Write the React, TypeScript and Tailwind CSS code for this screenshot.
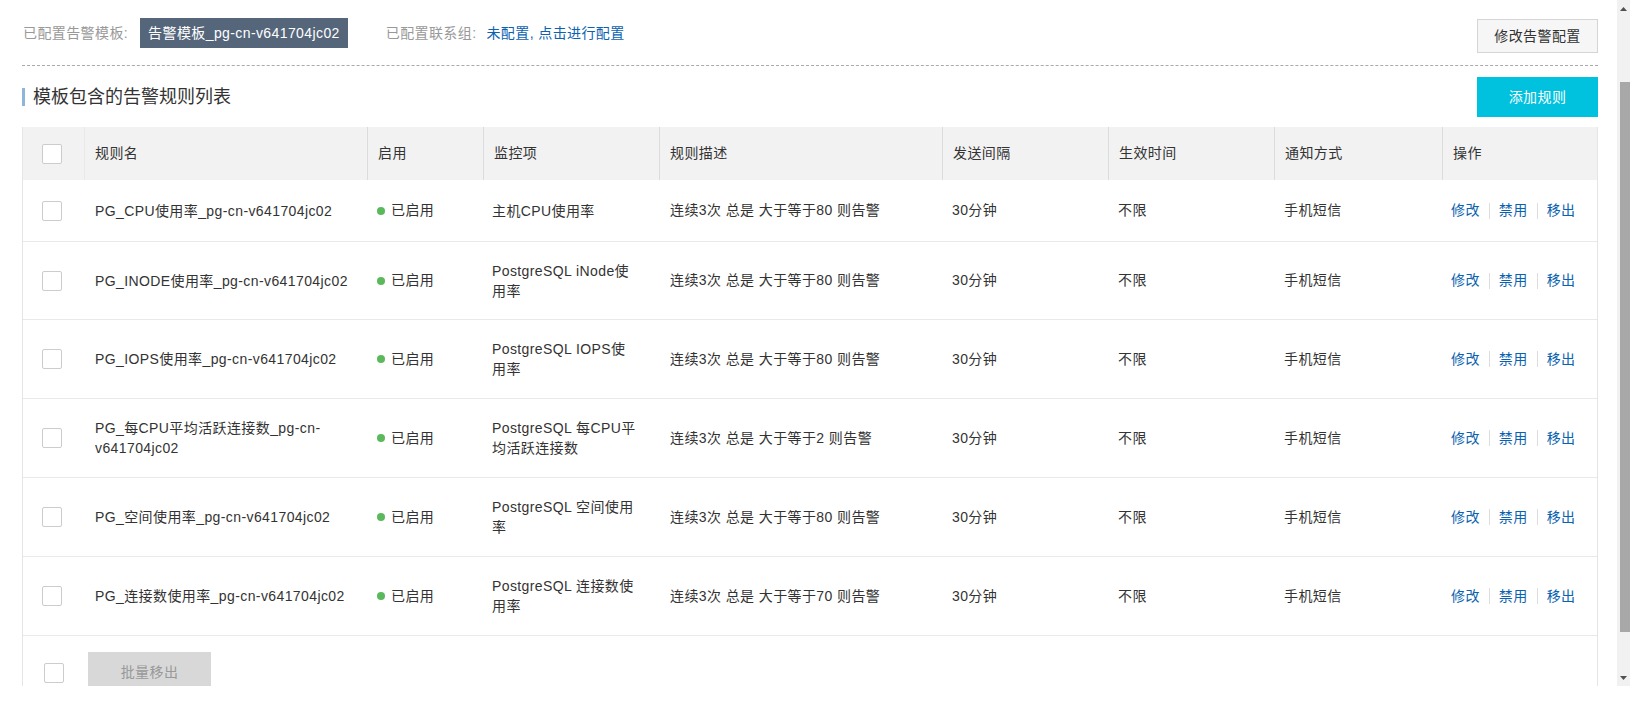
import React from 'react';

const font = { fontFamily: '"Liberation Sans", "Noto Sans CJK SC", sans-serif' };

const cols = 'grid grid-cols-[61px_283px_116px_176px_283px_166px_166px_168px_155px]';

const rows = [
  { name: ['PG_CPU使用率_pg-cn-v641704jc02'], monitor: ['主机CPU使用率'], desc: '连续3次 总是 大于等于80 则告警', h: 'h-[62px]' },
  { name: ['PG_INODE使用率_pg-cn-v641704jc02'], monitor: ['PostgreSQL iNode使', '用率'], desc: '连续3次 总是 大于等于80 则告警', h: 'h-[78px]' },
  { name: ['PG_IOPS使用率_pg-cn-v641704jc02'], monitor: ['PostgreSQL IOPS使', '用率'], desc: '连续3次 总是 大于等于80 则告警', h: 'h-[79px]' },
  { name: ['PG_每CPU平均活跃连接数_pg-cn-', 'v641704jc02'], monitor: ['PostgreSQL 每CPU平', '均活跃连接数'], desc: '连续3次 总是 大于等于2 则告警', h: 'h-[79px]' },
  { name: ['PG_空间使用率_pg-cn-v641704jc02'], monitor: ['PostgreSQL 空间使用', '率'], desc: '连续3次 总是 大于等于80 则告警', h: 'h-[79px]' },
  { name: ['PG_连接数使用率_pg-cn-v641704jc02'], monitor: ['PostgreSQL 连接数使', '用率'], desc: '连续3次 总是 大于等于70 则告警', h: 'h-[79px]' },
];

const Checkbox = () => (
  <span className="block w-[20px] h-[20px] bg-white border border-[#cccccc] rounded-[2px]" />
);

const Lines = ({ lines }: { lines: string[] }) => (
  <div className="leading-[20px] whitespace-nowrap">
    {lines.map((l, i) => (
      <div key={i}>{l}</div>
    ))}
  </div>
);

const headers = ['规则名', '启用', '监控项', '规则描述', '发送间隔', '生效时间', '通知方式', '操作'];

const Arrow = ({ down }: { down?: boolean }) => (
  <div className="h-[17px] flex items-center justify-center">
    <svg width="7" height="4" viewBox="0 0 7 4">
      <path d={down ? 'M0 0h7L3.5 4z' : 'M0 4h7L3.5 0z'} fill="#505050" />
    </svg>
  </div>
);

export default function App() {
  return (
    <div className="w-[1630px] h-[713px] bg-white text-[14px] tracking-[0.4px] text-[#333]" style={font}>
      <div className="flex h-[686px]">
        <div className="w-[1617px] h-[686px] overflow-hidden pl-[22px] pr-[19px] pt-[18px]">
          {/* configured template / contacts */}
          <div className="flex justify-between items-start">
            <div className="flex items-center h-[30px] pl-[1px]">
              <span className="text-[#999]">已配置告警模板:</span>
              <span className="ml-[12px] h-[30px] px-[8px] flex items-center bg-[#55667b] text-white">
                告警模板_pg-cn-v641704jc02
              </span>
              <span className="ml-[38px] text-[#999]">已配置联系组:</span>
              <a className="ml-[10px] text-[#0a62b0] cursor-pointer">未配置, 点击进行配置</a>
            </div>
            <button className="mt-[1px] w-[121px] h-[34px] border border-[#d5d5d5] bg-[#f6f6f6] text-[#333]">
              修改告警配置
            </button>
          </div>

          <div className="mt-[12px] border-t border-dashed border-[#aaaaaa]" />

          {/* title */}
          <div className="mt-[11px] flex justify-between items-center">
            <div className="flex items-center">
              <span className="w-[3px] h-[18px] bg-[#8db6da]" />
              <span className="ml-[8px] text-[18px] tracking-normal text-[#333]">模板包含的告警规则列表</span>
            </div>
            <button className="w-[121px] h-[40px] bg-[#00c1de] text-white">添加规则</button>
          </div>

          {/* table */}
          <div className="mt-[10px] border-x border-[#e5e5e5]">
            <div className={`${cols} h-[53px] bg-[#f2f2f2] items-stretch`}>
              <div className="flex items-center pl-[19px]">
                <Checkbox />
              </div>
              {headers.map((h, i) => (
                <div
                  key={h}
                  className={`flex items-center pl-[10px] border-l ${i === 0 ? 'border-[#e9e9e9]' : 'border-[#dcdcdc]'}`}
                >
                  {h}
                </div>
              ))}
            </div>

            {rows.map((r, idx) => (
              <div key={idx} className={`${cols} ${r.h} items-center border-b border-[#e9e9e9]`}>
                <div className="pl-[19px]">
                  <Checkbox />
                </div>
                <div className="pl-[11px]">
                  <Lines lines={r.name} />
                </div>
                <div className="pl-[10px] flex items-center">
                  <span className="w-[8px] h-[8px] rounded-full bg-[#5bb85b]" />
                  <span className="ml-[6px]">已启用</span>
                </div>
                <div className="pl-[9px]">
                  <Lines lines={r.monitor} />
                </div>
                <div className="pl-[11px] whitespace-nowrap">{r.desc}</div>
                <div className="pl-[10px]">30分钟</div>
                <div className="pl-[10px]">不限</div>
                <div className="pl-[10px]">手机短信</div>
                <div className="pl-[9px] flex items-center text-[#0a62b0]">
                  <a className="cursor-pointer">修改</a>
                  <span className="w-px h-[16px] bg-[#dddddd] mx-[9px]" />
                  <a className="cursor-pointer">禁用</a>
                  <span className="w-px h-[16px] bg-[#dddddd] mx-[9px]" />
                  <a className="cursor-pointer">移出</a>
                </div>
              </div>
            ))}

            <div className="flex items-start pl-[21px] pt-[16px] h-[60px]">
              <div className="mt-[11px]">
                <Checkbox />
              </div>
              <button className="ml-[24px] w-[123px] h-[40px] bg-[#d8d8d8] text-[#999]">批量移出</button>
            </div>
          </div>
        </div>

        {/* scrollbar */}
        <div className="w-[13px] h-[686px] bg-[#f1f1f1] flex flex-col">
          <Arrow />
          <div className="h-[65px]" />
          <div className="h-[550px] ml-[3px] bg-[#a8a8a8]" />
          <div className="flex-1" />
          <Arrow down />
        </div>
      </div>
    </div>
  );
}
